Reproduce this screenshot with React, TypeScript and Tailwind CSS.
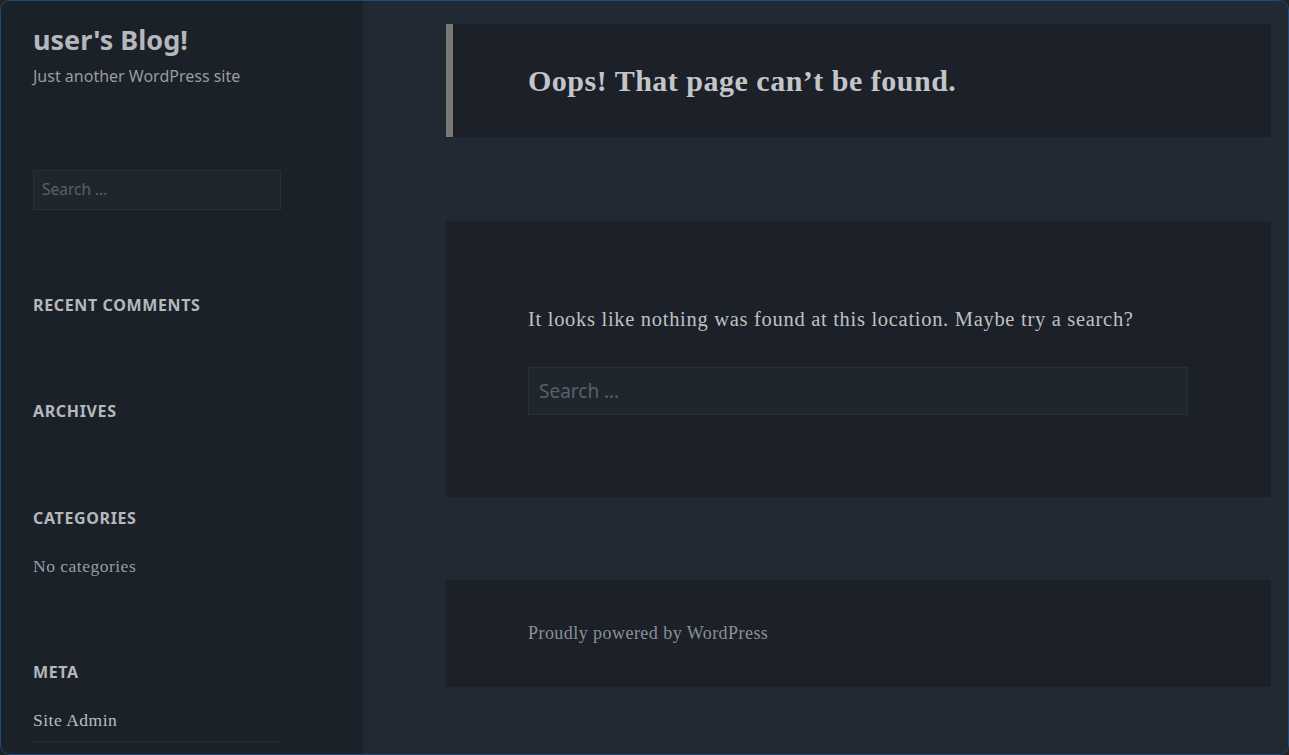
export default function App() {
  const sans = "font-['Noto_Sans',sans-serif]";
  const serif = "font-['Liberation_Serif',serif]";

  return (
    <div className="w-[1289px] h-[755px] bg-[#232323]">
      <div className="h-full rounded-[10px] border border-[#1e4a7f] overflow-hidden flex">
        {/* Sidebar */}
        <aside className={`w-[362px] shrink-0 bg-[#1b2129] pl-[32px] pr-[82px] pt-[21px] ${sans}`}>
          <h1 className="text-[27px] font-bold leading-[36px] text-[#b5b7ba]">user's Blog!</h1>
          <p className="text-[16px] leading-[24px] text-[#999ca0] mt-[6px]">Just another WordPress site</p>

          <div className="mt-[82px] h-[40px] border border-[#28303a] bg-[#1f262e] flex items-center px-[8px] text-[15.5px] text-[#5b626b]">
            Search …
          </div>

          <h2 className="mt-[84px] text-[16px] font-bold tracking-[0.04em] leading-[22px] text-[#b5b8bc]">RECENT COMMENTS</h2>
          <h2 className="mt-[84px] text-[16px] font-bold tracking-[0.04em] leading-[22px] text-[#b5b8bc]">ARCHIVES</h2>
          <h2 className="mt-[85px] text-[16px] font-bold tracking-[0.04em] leading-[22px] text-[#b5b8bc]">CATEGORIES</h2>
          <p className={`mt-[26px] text-[17.5px] tracking-[0.5px] leading-[22px] text-[#999da2] ${serif}`}>No categories</p>
          <h2 className="mt-[84px] text-[16px] font-bold tracking-[0.04em] leading-[22px] text-[#b5b8bc]">META</h2>
          <ul className={`mt-[26px] text-[17.5px] tracking-[0.5px] text-[#bcbec1] ${serif}`}>
            <li className="leading-[22px] pb-[10px] border-b border-[#262d36]">Site Admin</li>
            <li className="leading-[22px] pt-[10px]">Log out</li>
          </ul>
        </aside>

        {/* Main */}
        <main className="flex-1 bg-[#212a33] pl-[83px] pr-[17px] pt-[23px]">
          <header className="h-[113px] bg-[#1b2029] border-l-[7px] border-[#7a7875] flex items-center pl-[75px]">
            <h1 className={`text-[30px] font-bold tracking-[0.5px] text-[#c4c5c7] ${serif}`}>Oops! That page can’t be found.</h1>
          </header>

          <section className="mt-[84px] h-[276px] bg-[#1b2029] px-[82px] pt-[84px]">
            <p className={`text-[20.5px] tracking-[0.7px] leading-[28px] text-[#c0c1c3] ${serif}`}>
              It looks like nothing was found at this location. Maybe try a search?
            </p>
            <div className={`mt-[34px] w-[660px] h-[48px] border border-[#28303a] bg-[#1f262e] flex items-center px-[10px] text-[19px] text-[#5a6068] ${sans}`}>
              Search …
            </div>
          </section>

          <footer className="mt-[83px] h-[107px] bg-[#1b2029] px-[82px] flex items-center">
            <p className={`text-[18px] tracking-[0.45px] text-[#8b9095] ${serif}`}>Proudly powered by WordPress</p>
          </footer>
        </main>
      </div>
    </div>
  );
}
